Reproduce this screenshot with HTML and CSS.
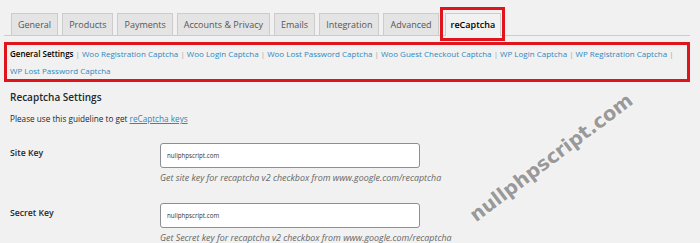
FILE: index.html
```html
<!DOCTYPE html>
<html lang="en">
<head>
    <meta charset="UTF-8">
    <title>reCaptcha Settings</title>
    <link rel="stylesheet" href="styles.css">
</head>
<body>
    <div class="wrap">
        <nav class="nav-tabs">
            <a class="tab" href="#">General</a>
            <a class="tab" href="#">Products</a>
            <a class="tab" href="#">Payments</a>
            <a class="tab" href="#">Accounts &amp; Privacy</a>
            <a class="tab" href="#">Emails</a>
            <a class="tab" href="#">Integration</a>
            <a class="tab" href="#">Advanced</a>
            <a class="tab tab-active" href="#">reCaptcha</a>
        </nav>

        <ul class="subsub">
            <li><a class="current" href="#">General Settings</a> |</li>
            <li><a href="#">Woo Registration Captcha</a> |</li>
            <li><a href="#">Woo Login Captcha</a> |</li>
            <li><a href="#">Woo Lost Password Captcha</a> |</li>
            <li><a href="#">Woo Guest Checkout Captcha</a> |</li>
            <li><a href="#">WP Login Captcha</a> |</li>
            <li><a href="#">WP Registration Captcha</a> |</li>
            <li><a href="#">WP Lost Password Captcha</a></li>
        </ul>

        <h2 class="section-title">Recaptcha Settings</h2>
        <p class="guide">Please use this guideline to get <a href="#">reCaptcha keys</a></p>

        <div class="form-row">
            <label class="form-label">Site Key</label>
            <div class="form-field">
                <input class="text-input" type="text" value="nullphpscript.com">
                <p class="description">Get site key for recaptcha v2 checkbox from www.google.com/recaptcha</p>
            </div>
        </div>

        <div class="form-row">
            <label class="form-label">Secret Key</label>
            <div class="form-field">
                <input class="text-input" type="text" value="nullphpscript.com">
                <p class="description">Get Secret key for recaptcha v2 checkbox from www.google.com/recaptcha</p>
            </div>
        </div>
    </div>

    <div class="watermark">nullphpscript.com</div>
</body>
</html>
```

FILE: styles.css
```css
:root {
    --bg-color: #f1f1f1;
    --text-color: #23282d;
    --link-color: #3088bd;
    --mark-color: #e0141c;
}

body {
    font-family: 'Open Sans', 'Noto Sans', sans-serif;
    margin: 0;
    padding: 0;
    background-color: var(--bg-color);
    color: var(--text-color);
    overflow: hidden;
}

.wrap {
    padding: 13px 10px 0 4px;
}

.nav-tabs {
    display: flex;
    gap: 4px;
    padding-left: 7px;
    border-bottom: 1px solid #cccccc;
    height: 22px;
}

.tab {
    position: relative;
    display: block;
    height: 21px;
    line-height: 21px;
    padding: 0 6px;
    border: 1px solid #cccccc;
    border-bottom: none;
    background-color: #e4e4e4;
    color: #555555;
    font-size: 9px;
    text-decoration: none;
}

.tab-active {
    background-color: var(--bg-color);
    color: #000000;
    font-weight: 600;
    height: 22px;
    margin-left: 2px;
    padding: 0 5px;
}

.tab-active::after {
    content: "";
    position: absolute;
    top: -7px;
    bottom: -5px;
    left: -6px;
    right: -5px;
    border: 3px solid var(--mark-color);
}

.subsub {
    list-style: none;
    margin: 6px 0 0;
    padding: 0 4px 0 3px;
    border: 3px solid var(--mark-color);
    display: flex;
    flex-wrap: wrap;
    font-size: 8px;
    line-height: 17px;
    color: #a0a5aa;
}

.subsub li {
    margin-right: 2px;
}

.subsub a {
    color: var(--link-color);
    text-decoration: none;
}

.subsub a.current {
    color: #000000;
    font-weight: 600;
}

.section-title {
    font-size: 10px;
    font-weight: 600;
    line-height: 14px;
    margin: 8px 0 0 6px;
}

.guide {
    font-size: 8.2px;
    line-height: 11px;
    margin: 9px 0 0 6px;
}

.guide a {
    color: var(--link-color);
}

.form-row {
    display: flex;
    margin: 19px 0 0 6px;
}

.form-row + .form-row {
    margin-top: 19px;
}

.form-label {
    width: 150px;
    padding-top: 4px;
    font-size: 8.7px;
    line-height: 12px;
    font-weight: 600;
}

.text-input {
    display: block;
    box-sizing: border-box;
    width: 260px;
    height: 25px;
    padding: 0 6px;
    border: 1px solid #8c8f94;
    border-radius: 3px;
    background-color: #ffffff;
    font-family: inherit;
    font-size: 6.2px;
    color: #333333;
}

.description {
    margin: 4px 0 0;
    font-size: 8.9px;
    line-height: 12px;
    font-style: italic;
    color: #666666;
}

.watermark {
    position: absolute;
    left: 452px;
    top: 146px;
    transform: rotate(-37deg);
    font-family: 'DejaVu Sans', sans-serif;
    font-size: 19.5px;
    font-weight: 700;
    color: #999999;
    text-shadow: 0 0 2px #ffffff;
}
```
